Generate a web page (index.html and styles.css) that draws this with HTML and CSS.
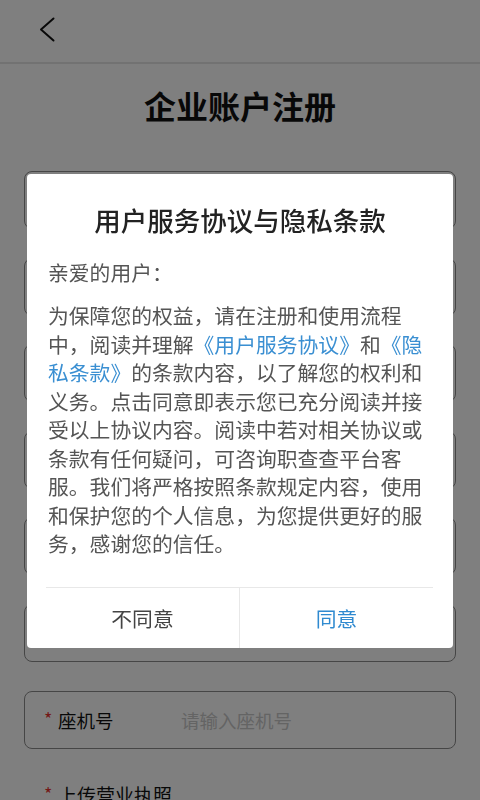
FILE: index.html
```html
<!DOCTYPE html>
<html lang="zh-CN">
<head>
<meta charset="utf-8">
<meta name="viewport" content="width=480">
<title>企业账户注册</title>
<link rel="stylesheet" href="styles.css">
</head>
<body>
<div class="page">
  <header class="topbar">
    <svg class="back" width="16" height="26" viewBox="0 0 16 26" aria-hidden="true">
      <polyline points="14.5,1.5 2,12.5 14.5,23.5" fill="none" stroke="#111" stroke-width="2" stroke-linecap="round" stroke-linejoin="round"/>
    </svg>
  </header>
  <h1 class="title">企业账户注册</h1>
  <div class="form">
    <div class="field"></div>
    <div class="field"></div>
    <div class="field"></div>
    <div class="field"></div>
    <div class="field"></div>
    <div class="field"></div>
    <div class="field">
      <span class="req">*</span><span class="label">座机号</span><span class="placeholder">请输入座机号</span>
    </div>
    <div class="upload">
      <span class="req">*</span><span class="label">上传营业执照</span>
    </div>
  </div>
</div>

<div class="mask">
  <div class="dialog">
    <h2 class="dialog-title">用户服务协议与隐私条款</h2>
    <p class="greeting">亲爱的用户：</p>
    <p class="para">为保障您的权益，请在注册和使用流程中，阅读并理解<span class="link">《用户服务协议》</span>和<span class="link">《隐私条款》</span>的条款内容，以了解您的权利和义务。点击同意即表示您已充分阅读并接受以上协议内容。阅读中若对相关协议或条款有任何疑问，可咨询职查查平台客服。我们将严格按照条款规定内容，使用和保护您的个人信息，为您提供更好的服务，感谢您的信任。</p>
    <div class="actions">
      <div class="btn btn-cancel">不同意</div>
      <div class="btn btn-ok">同意</div>
    </div>
  </div>
</div>
</body>
</html>
```

FILE: styles.css
```css
* { box-sizing: border-box; }

html, body {
  margin: 0;
  padding: 0;
  background: #fff;
}

body {
  font-family: "Noto Sans CJK SC", "Noto Sans", sans-serif;
  color: #111;
  width: 480px;
  height: 800px;
  overflow: hidden;
}

.topbar {
  height: 64px;
  display: flex;
  align-items: center;
  padding: 0 0 2px 39px;
  border-bottom: 2px solid #e4e4e4;
}

.back { display: block; }

.title {
  margin: 19px 0 0;
  font-size: 32px;
  line-height: 44px;
  font-weight: 700;
  text-align: center;
  color: #111;
}

.form {
  margin-top: 44px;
  padding: 0 24px;
  display: flex;
  flex-direction: column;
  gap: 28.6px;
}

.field {
  height: 58px;
  border: 1.5px solid #8c8c8c;
  border-radius: 8px;
  display: flex;
  align-items: center;
  padding-left: 19px;
  font-size: 18.5px;
}

.req {
  display: inline-block;
  width: 14px;
  color: #e8332f;
  font-size: 18px;
  align-self: center;
  position: relative;
  top: -2px;
}

.label {
  display: inline-block;
  width: 123px;
  color: #111;
}

.placeholder { color: #c8c8c8; }

.upload {
  margin-top: 4px;
  padding-left: 20px;
  display: flex;
  align-items: center;
  font-size: 19px;
  line-height: 28px;
}

.mask {
  position: fixed;
  inset: 0;
  background: rgba(0, 0, 0, 0.5);
  padding: 174px 27px 0;
}

.dialog {
  background: #fff;
  border-radius: 4px;
  padding-top: 28px;
  overflow: hidden;
}

.dialog-title {
  margin: 0;
  font-size: 26.5px;
  line-height: 36px;
  font-weight: 500;
  text-align: center;
  color: #222;
}

.greeting,
.para {
  margin: 0 21px;
  font-size: 20.8px;
  line-height: 28.5px;
  color: #555;
}

.greeting { margin-top: 20px; }
.para { margin-top: 14.5px; }

.link { color: #3a8fd2; }

.actions {
  margin: 29px 20px 0 19px;
  border-top: 1.5px solid #e8e8e8;
  display: flex;
}

.btn {
  flex: 1;
  height: 60px;
  display: flex;
  align-items: center;
  justify-content: center;
  font-size: 20.8px;
}

.btn-cancel {
  color: #444;
  border-right: 1.5px solid #e8e8e8;
}

.btn-ok { color: #2f8ad0; }
```
